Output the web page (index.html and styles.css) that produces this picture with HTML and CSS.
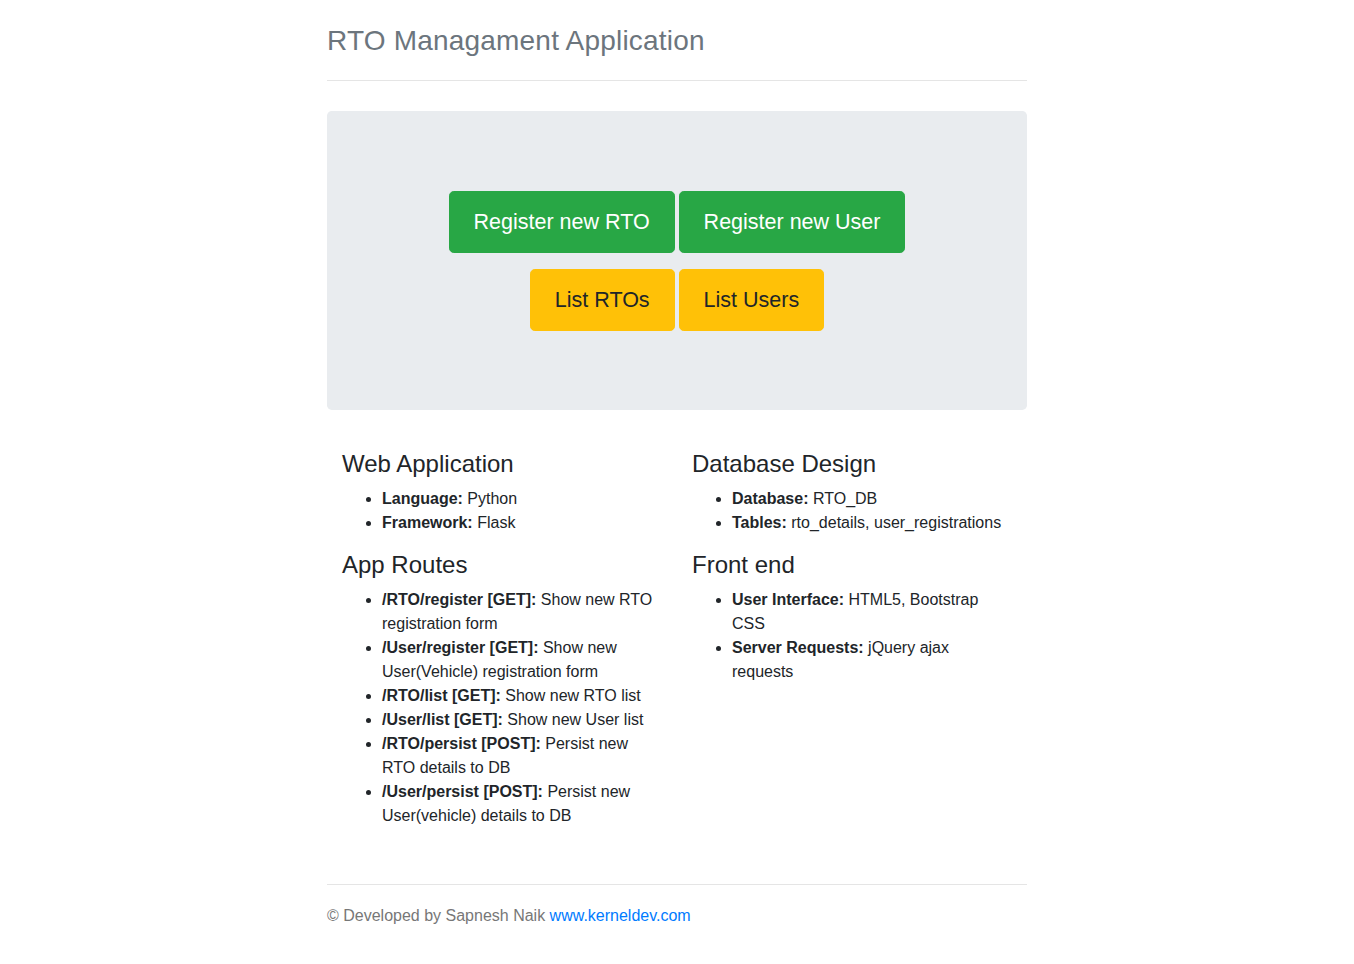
FILE: index.html
```html
<!DOCTYPE html>
<html lang="en">
<head>
<meta charset="utf-8">
<title>RTO Managament Application</title>
<link rel="stylesheet" href="styles.css">
</head>
<body>
<div class="container">
  <header class="header">
    <h3 class="title">RTO Managament Application</h3>
  </header>

  <main class="jumbotron">
    <div class="btn-row">
      <a class="btn btn-success" href="#">Register new RTO</a>
      <a class="btn btn-success" href="#">Register new User</a>
    </div>
    <div class="btn-row">
      <a class="btn btn-warning" href="#">List RTOs</a>
      <a class="btn btn-warning" href="#">List Users</a>
    </div>
  </main>

  <section class="marketing">
    <div class="col">
      <h4>Web Application</h4>
      <ul>
        <li><b>Language:</b> Python</li>
        <li><b>Framework:</b> Flask</li>
      </ul>
      <h4>App Routes</h4>
      <ul>
        <li><b>/RTO/register [GET]:</b> Show new RTO registration form</li>
        <li><b>/User/register [GET]:</b> Show new User(Vehicle) registration form</li>
        <li><b>/RTO/list [GET]:</b> Show new RTO list</li>
        <li><b>/User/list [GET]:</b> Show new User list</li>
        <li><b>/RTO/persist [POST]:</b> Persist new RTO details to DB</li>
        <li><b>/User/persist [POST]:</b> Persist new User(vehicle) details to DB</li>
      </ul>
    </div>
    <div class="col">
      <h4>Database Design</h4>
      <ul>
        <li><b>Database:</b> RTO_DB</li>
        <li><b>Tables:</b> rto_details, user_registrations</li>
      </ul>
      <h4>Front end</h4>
      <ul>
        <li><b>User Interface:</b> HTML5, Bootstrap CSS</li>
        <li><b>Server Requests:</b> jQuery ajax requests</li>
      </ul>
    </div>
  </section>

  <footer class="footer">
    <p>&copy; Developed by Sapnesh Naik <a href="#">www.kerneldev.com</a></p>
  </footer>
</div>
</body>
</html>
```

FILE: styles.css
```css
* { box-sizing: border-box; }

html, body {
  margin: 0;
  background: #fff;
}

body {
  font-family: "Liberation Sans", Arial, Helvetica, sans-serif;
  font-size: 16px;
  line-height: 1.5;
  color: #212529;
  padding-top: 24px;
  padding-bottom: 24px;
}

.container {
  max-width: 730px;
  margin: 0 auto;
  padding: 0 15px;
}

.header {
  border-bottom: 1px solid #e5e5e5;
  padding-bottom: 22px;
  margin-bottom: 30px;
}

.title {
  margin: 0;
  font-size: 28px;
  font-weight: 400;
  line-height: 34px;
  color: #6c757d;
  letter-spacing: 0.2px;
}

.jumbotron {
  background: #e9ecef;
  border-radius: 4.8px;
  padding: 80px 32px 79px;
  display: flex;
  flex-direction: column;
  align-items: center;
  gap: 16px;
}

.btn-row {
  display: flex;
  justify-content: center;
  gap: 4px;
}

.btn {
  display: inline-block;
  font-size: 21.5px;
  line-height: 36px;
  padding: 12px 24px;
  border: 1px solid transparent;
  border-radius: 4.8px;
  text-decoration: none;
  font-weight: 400;
}

.btn-success {
  background: #28a745;
  border-color: #28a745;
  color: #fff;
}

.btn-warning {
  background: #ffc107;
  border-color: #ffc107;
  color: #212529;
}

.marketing {
  display: grid;
  grid-template-columns: 1fr 1fr;
  margin: 40px 0 40px;
}

.col {
  padding: 0 15px;
}

.col h4 {
  font-size: 24px;
  font-weight: 400;
  line-height: 1.2;
  margin: 0 0 8px;
}

.col ul {
  margin: 0 0 16px;
  padding-left: 40px;
}

.col b {
  font-weight: 700;
}

.footer {
  border-top: 1px solid #e5e5e5;
  padding-top: 19px;
  color: #777;
}

.footer p {
  margin: 0 0 16px;
}

.footer a {
  color: #007bff;
  text-decoration: none;
}
```
